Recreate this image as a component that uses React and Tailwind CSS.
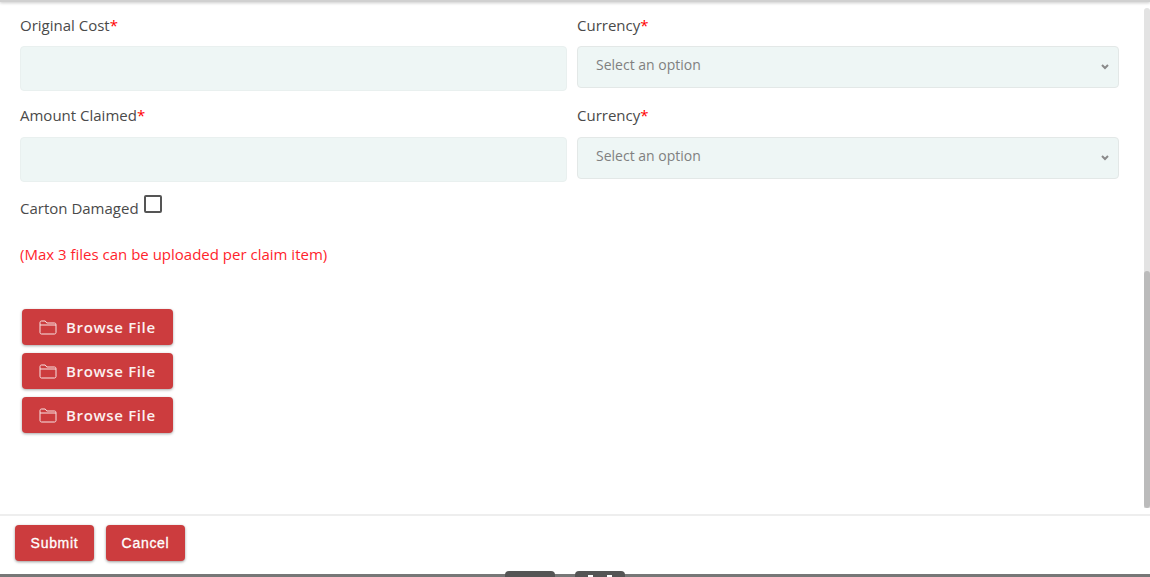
import React from "react";

const Req = () => <span className="text-[#ff0000]">*</span>;

const Label = ({ children }) => (
  <div className="h-[20px] text-[15px] leading-[20px] text-[#4a4a4a]">{children}<Req /></div>
);

const Input = () => (
  <div className="h-[45px] rounded-[4px] border border-[#e9f0ef] bg-[#eef6f5]" />
);

const Select = () => (
  <div className="flex h-[42px] items-center justify-between rounded-[4px] border border-[#e3e8e7] bg-[#eef6f5] pb-[6px] pl-[18px] pr-[9px]">
    <span className="text-[14px] text-[#808080]">Select an option</span>
    <svg width="8" height="6" viewBox="0 0 8 6" fill="none" stroke="#8a8a8a" strokeWidth="2" className="relative top-[3px]"><path d="M1 1 L4 4 L7 1" /></svg>
  </div>
);

const Browse = () => (
  <button className="flex h-[36px] w-[151px] items-center rounded-[4px] bg-[#cc3c3e] pl-[17px] text-[15px] font-semibold tracking-[0.65px] text-[#fbf0f0] shadow-[0_1px_3px_rgba(0,0,0,0.35)]">
    <svg width="18" height="15" viewBox="0 0 18 15" fill="none" stroke="#f8e4e4" strokeWidth="1" className="mr-[9px]">
      <path d="M1 12.5V2.5C1 1.7 1.6 1 2.4 1H6.2L7.8 3H15.6C16.4 3 17 3.7 17 4.5V12.5C17 13.3 16.4 14 15.6 14H2.4C1.6 14 1 13.3 1 12.5Z" />
      <path d="M1 5H17" />
    </svg>
    Browse File
  </button>
);

const Action = ({ children }) => (
  <button className="flex h-[36px] w-[79px] items-center justify-center rounded-[4px] bg-[#cc3c3e] text-[14px] tracking-[0.7px] text-white shadow-[0_1px_3px_rgba(0,0,0,0.4)] [-webkit-text-stroke:0.3px_white] [font-family:'Liberation_Sans',sans-serif]">
    {children}
  </button>
);

export default function App() {
  return (
    <div className="relative flex h-[577px] w-[1150px] flex-col overflow-hidden bg-white [font-family:'Open_Sans',sans-serif]">
      <div className="h-[2px] bg-[#d0d0d0] shadow-[0_1px_3px_rgba(0,0,0,0.25)]" />
      <div className="flex-1 pl-[20px] pr-[31px] pt-[13px]">
        <div className="flex gap-[10px]">
          <div className="flex w-[547px] flex-col gap-[11px]"><Label>Original Cost</Label><Input /></div>
          <div className="flex w-[542px] flex-col gap-[11px]"><Label>Currency</Label><Select /></div>
        </div>
        <div className="mt-[14px] flex gap-[10px]">
          <div className="flex w-[547px] flex-col gap-[12px]"><Label>Amount Claimed</Label><Input /></div>
          <div className="flex w-[542px] flex-col gap-[12px]"><Label>Currency</Label><Select /></div>
        </div>
        <div className="mt-[15px] flex h-[22px] items-center text-[15px] text-[#4a4a4a]">
          <span>Carton Damaged</span>
          <span className="relative top-[-4px] ml-[5px] h-[18px] w-[18px] rounded-[2px] border-2 border-[#555555]" />
        </div>
        <div className="mt-[25px] text-[15px] leading-[20px] text-[#ff1f2d]">(Max 3 files can be uploaded per claim item)</div>
        <div className="ml-[2px] mt-[45px] flex flex-col gap-[8px]">
          <Browse /><Browse /><Browse />
        </div>
      </div>
      <div className="flex h-[60px] gap-[12px] border-t-2 border-[#eeeeee] pl-[15px] pt-[9px]">
        <Action>Submit</Action>
        <Action>Cancel</Action>
      </div>
      <div className="h-[3px] bg-[#777777]" />

      <div className="absolute right-0 top-[8px] h-[500px] w-[6px] rounded-t-[3px] bg-[#e3e3e3]" />
      <div className="absolute right-0 top-[271px] h-[237px] w-[6px] rounded-[3px] bg-[#bbbbbb]" />
      <div className="absolute left-[505px] top-[571px] h-[6px] w-[50px] rounded-t-[4px] bg-[#555555]" />
      <div className="absolute left-[575px] top-[571px] h-[6px] w-[50px] rounded-t-[4px] bg-[#555555]" />
      <div className="absolute left-[588px] top-[575px] h-[2px] w-[5px] bg-white" />
      <div className="absolute left-[607px] top-[575px] h-[2px] w-[5px] bg-white" />
    </div>
  );
}
